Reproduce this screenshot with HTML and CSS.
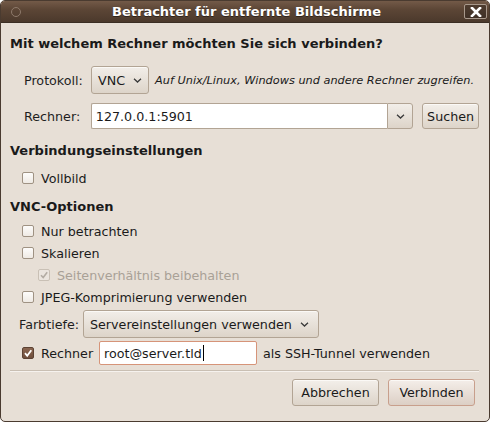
FILE: index.html
```html
<!DOCTYPE html>
<html lang="de">
<head>
<meta charset="utf-8">
<title>Betrachter für entfernte Bildschirme</title>
<link rel="stylesheet" href="styles.css">
</head>
<body>
<div class="window">
  <div class="titlebar">
    <span class="menu-dot"></span>
    <span class="title">Betrachter für entfernte Bildschirme</span>
    <span class="close">
      <svg width="12" height="10" viewBox="0 0 12 10"><path d="M2 1 L10 9 M10 1 L2 9" stroke="#fff" stroke-width="2.6" stroke-linecap="square"/></svg>
    </span>
  </div>
  <div class="content">
    <div class="heading h-main">Mit welchem Rechner möchten Sie sich verbinden?</div>

    <div class="row row-proto">
      <span class="label">Protokoll:</span>
      <span class="combo combo-vnc">VNC<svg class="chev" width="9" height="5" viewBox="0 0 9 5"><path d="M1 0.8 L4.5 4 L8 0.8" fill="none" stroke="#3a3a3a" stroke-width="1.3"/></svg></span>
      <span class="hint">Auf Unix/Linux, Windows und andere Rechner zugreifen.</span>
    </div>

    <div class="row row-host">
      <span class="label">Rechner:</span>
      <span class="combo-entry">
        <span class="entry-text">127.0.0.1:5901</span>
        <span class="entry-btn"><svg class="chev" width="9" height="5" viewBox="0 0 9 5"><path d="M1 0.8 L4.5 4 L8 0.8" fill="none" stroke="#3a3a3a" stroke-width="1.3"/></svg></span>
      </span>
      <span class="button btn-search">Suchen</span>
    </div>

    <div class="heading h-conn">Verbindungseinstellungen</div>
    <label class="check row-full"><span class="box"></span>Vollbild</label>

    <div class="heading h-vnc">VNC-Optionen</div>
    <div class="options">
      <label class="check opt"><span class="box"></span>Nur betrachten</label>
      <label class="check opt"><span class="box"></span>Skalieren</label>
      <label class="check opt sub disabled"><span class="box checked-dis"><svg width="10" height="10" viewBox="0 0 10 10"><path d="M2 5.2 L4.2 7.6 L8.2 2.2" fill="none" stroke="#b3aca3" stroke-width="1.6"/></svg></span>Seitenverhältnis beibehalten</label>
      <label class="check opt"><span class="box"></span>JPEG-Komprimierung verwenden</label>
    </div>

    <div class="row row-depth">
      <span class="label">Farbtiefe:</span>
      <span class="combo combo-depth">Servereinstellungen verwenden<svg class="chev" width="9" height="5" viewBox="0 0 9 5"><path d="M1 0.8 L4.5 4 L8 0.8" fill="none" stroke="#3a3a3a" stroke-width="1.3"/></svg></span>
    </div>

    <div class="row row-ssh">
      <span class="box checked"><svg width="10" height="10" viewBox="0 0 10 10"><path d="M2 5.2 L4.2 7.8 L8.3 2.2" fill="none" stroke="#fff" stroke-width="1.8"/></svg></span>
      <span class="ssh-label">Rechner</span>
      <span class="entry ssh-entry">root@server.tld<span class="caret"></span></span>
      <span class="ssh-after">als SSH-Tunnel verwenden</span>
    </div>

    <div class="separator"></div>

    <div class="actions">
      <span class="button btn-action">Abbrechen</span>
      <span class="button btn-action btn-default">Verbinden</span>
    </div>
  </div>
</div>
</body>
</html>
```

FILE: styles.css
```css
* { box-sizing: border-box; }
html, body { margin: 0; padding: 0; background: #ffffff; }
body {
  font-family: "DejaVu Sans", "Liberation Sans", sans-serif;
  font-size: 12.7px;
  color: #1a1a1a;
}
.window {
  width: 490px;
  height: 422px;
  background: #e7dfd6;
  border: 1px solid #4a3b30;
  border-radius: 5px 5px 5px 5px;
  overflow: hidden;
  display: flex;
  flex-direction: column;
}
.titlebar {
  height: 22px;
  flex: none;
  background: linear-gradient(#735a48 0%, #5c4636 40%, #4b392c 100%);
  border-bottom: 1px solid #3b2e24;
  display: flex;
  align-items: center;
  color: #fff;
}
.menu-dot {
  width: 10px;
  height: 10px;
  border-radius: 50%;
  border: 1px solid #8e7a6b;
  margin-left: 10px;
  flex: none;
}
.title {
  flex: 1;
  text-align: center;
  font-weight: bold;
  font-size: 13px;
  text-shadow: 0 1px 0 #2e231b;
  padding-left: 8px;
}
.close {
  width: 23px;
  height: 15px;
  margin-right: 2px;
  border: 1px solid #a8998c;
  border-radius: 2px;
  background: linear-gradient(#4e3c2f, #3f3026);
  display: flex;
  align-items: center;
  justify-content: center;
  flex: none;
}
.content {
  padding: 0 10px 0 9px;
  display: flex;
  flex-direction: column;
  flex: 1;
}
.heading {
  font-weight: bold;
  font-size: 13px;
  height: 16px;
  line-height: 16px;
}
.h-main { margin-top: 13px; }
.row {
  display: flex;
  align-items: center;
}
.label { color: #1e1e1e; }
.row-proto { margin-top: 14px; height: 28px; }
.row-proto .label, .row-host .label { margin-left: 14px; width: 67px; }
.combo {
  height: 28px;
  display: flex;
  align-items: center;
  padding: 0 0 0 6px;
  border: 1px solid #b2a494;
  border-radius: 3px;
  background: linear-gradient(#f2eee9, #ddd4c9);
  box-shadow: inset 0 1px 0 #fbf9f6;
}
.combo-vnc { width: 58px; }
.combo-vnc .chev { margin-left: 8px; }
.hint {
  font-style: italic;
  font-size: 11.3px;
  margin-left: 6px;
}
.row-host { margin-top: 9px; height: 26px; }
.combo-entry {
  display: flex;
  height: 26px;
  width: 323px;
}
.entry-text {
  flex: 1;
  background: #fff;
  border: 1px solid #b2a494;
  border-right: none;
  border-radius: 2px 0 0 2px;
  padding-left: 4px;
  display: flex;
  align-items: center;
}
.entry-btn {
  width: 26px;
  border: 1px solid #b2a494;
  border-radius: 0 3px 3px 0;
  background: linear-gradient(#f2eee9, #ddd4c9);
  display: flex;
  align-items: center;
  justify-content: center;
}
.button {
  display: flex;
  align-items: center;
  justify-content: center;
  border: 1px solid #b2a494;
  border-radius: 3px;
  background: linear-gradient(#f3efea, #ddd4c9);
  box-shadow: inset 0 1px 0 #fbf9f6;
}
.btn-search { width: 57px; height: 26px; margin-left: 9px; }
.h-conn { margin-top: 14px; }
.check {
  display: flex;
  align-items: center;
  height: 18px;
}
.box {
  width: 12px;
  height: 12px;
  border: 1px solid #9f9283;
  border-radius: 2px;
  background: linear-gradient(#fdfcfb, #efeae4);
  margin-left: 12px;
  margin-right: 7px;
  flex: none;
  display: flex;
  align-items: center;
  justify-content: center;
}
.row-full { margin-top: 10px; }
.h-vnc { margin-top: 12px; }
.options { margin-top: 5px; display: flex; flex-direction: column; }
.opt { height: 22px; }
.sub .box { margin-left: 28px; }
.disabled { color: #a9a197; }
.checked-dis { border-color: #c9c0b5; background: #ebe5de; }
.row-depth { margin-top: 2px; height: 28px; }
.row-depth .label { margin-left: 9px; width: 64px; }
.combo-depth { width: 236px; padding-left: 6px; }
.combo-depth .chev { margin-left: auto; margin-right: 9px; }
.row-ssh { margin-top: 3px; height: 24px; }
.checked {
  background: linear-gradient(#8a6550, #6f4f3d);
  border-color: #5c4233;
}
.ssh-label { width: 58px; }
.entry {
  background: #fff;
  border: 1px solid #d69479;
  border-radius: 2px;
  height: 24px;
  display: flex;
  align-items: center;
  padding-left: 4px;
}
.ssh-entry { width: 158px; }
.caret {
  width: 1px;
  height: 16px;
  background: #000;
  margin-left: 1px;
}
.ssh-after { margin-left: 6px; }
.separator {
  margin-top: 5px;
  height: 2px;
  border-top: 1px solid #c9bfb3;
  border-bottom: 1px solid #f6f2ee;
}
.actions {
  margin-top: 7px;
  display: flex;
  justify-content: flex-end;
  gap: 9px;
  padding-right: 4px;
}
.btn-action { width: 87px; height: 27px; }
.btn-default { border-color: #c89f8c; background: linear-gradient(#f4eee9, #dccfc5); }
```
